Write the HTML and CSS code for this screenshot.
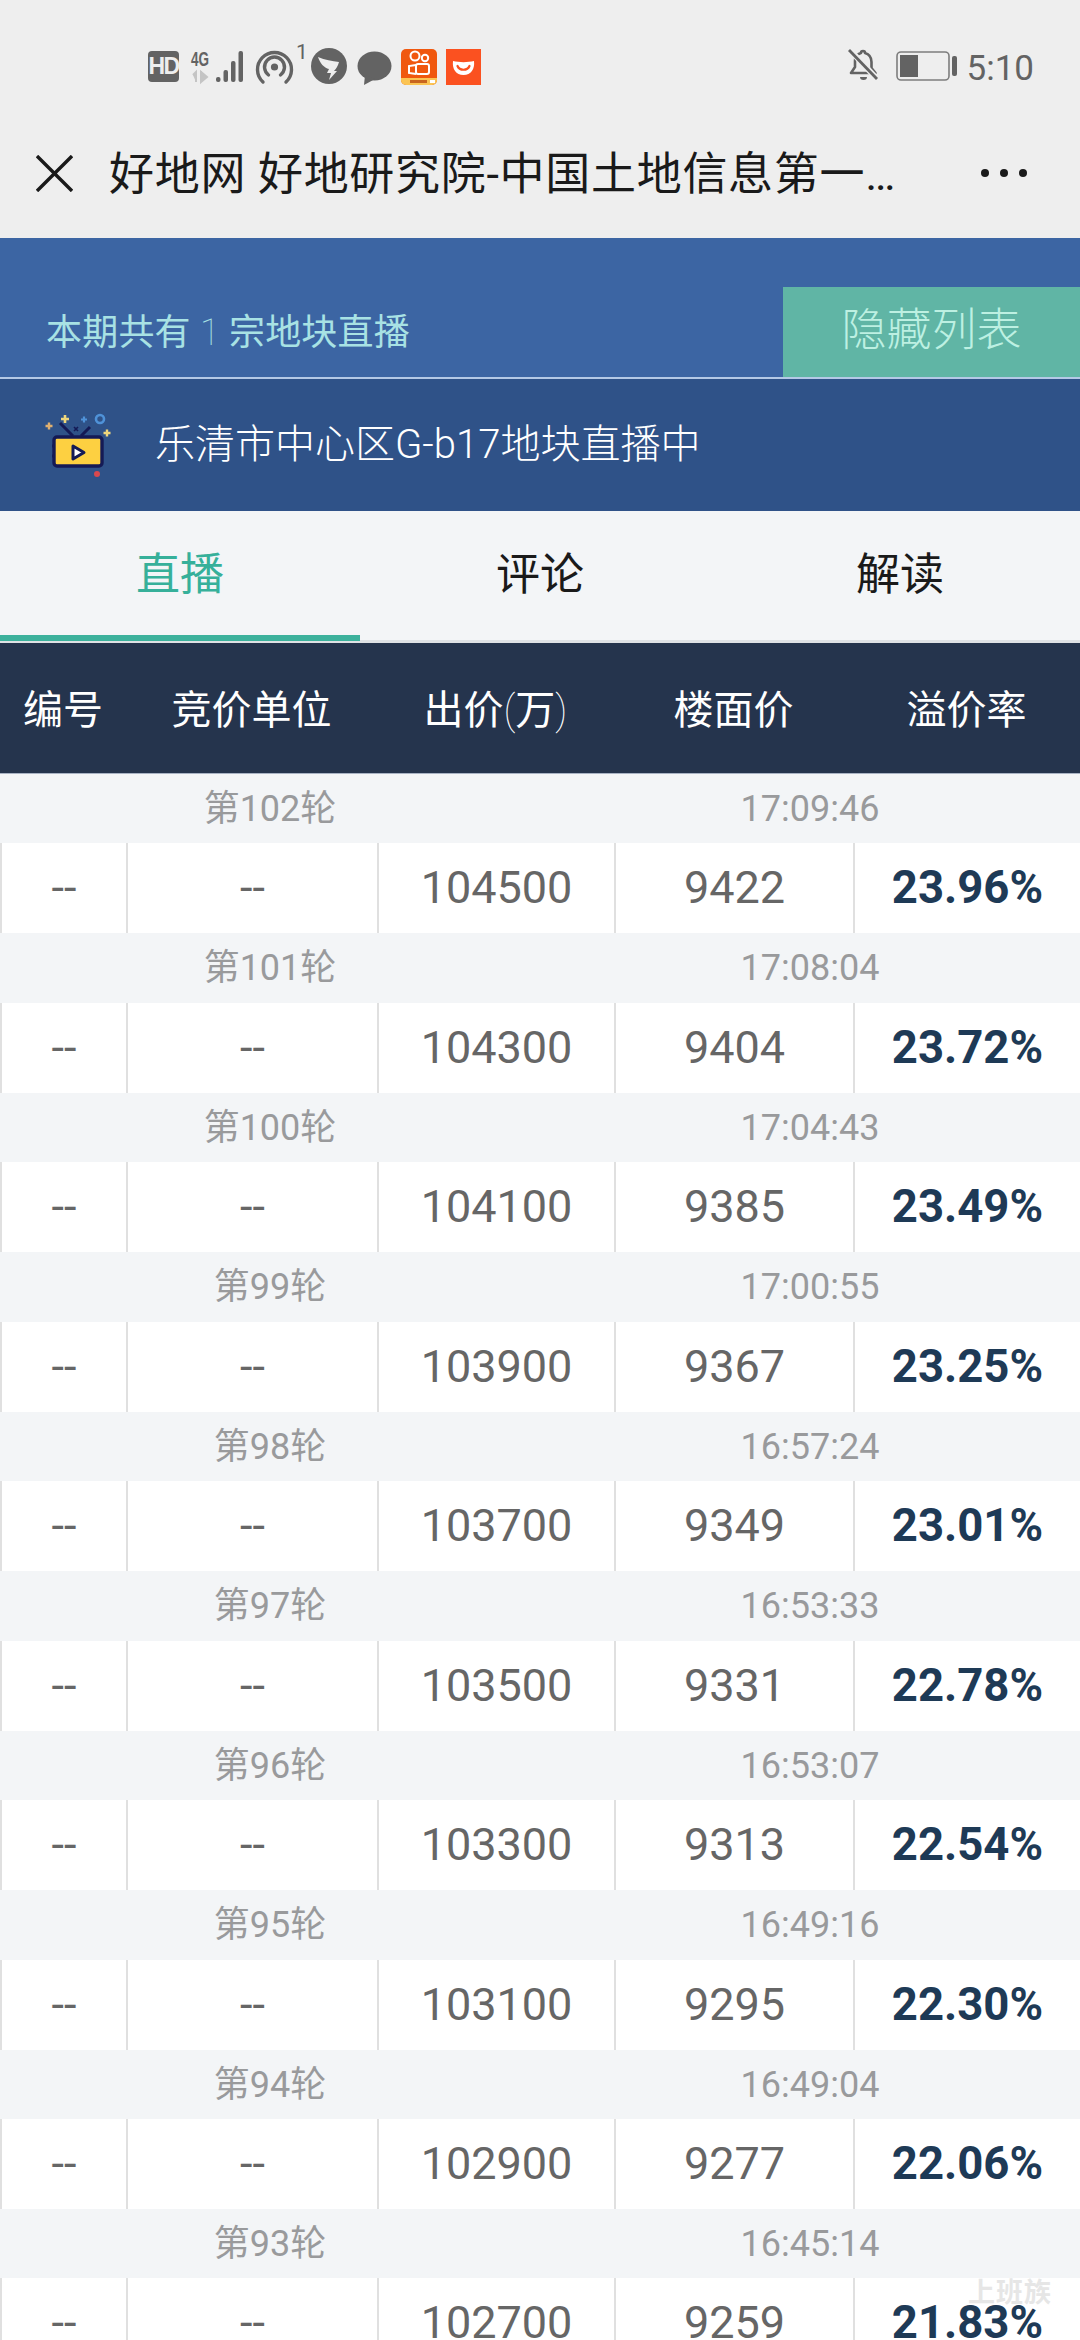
FILE: index.html
```html
<!DOCTYPE html>
<html lang="zh">
<head>
<meta charset="utf-8">
<title>好地网</title>
<link rel="stylesheet" href="styles.css">
</head>
<body>
<div class="page">
  <header class="chrome">
    <div class="status">
      <div class="status-left">
        <span class="hd">HD</span>
        <svg class="ic-signal" width="54" height="32" viewBox="0 0 54 32">
          <text x="0" y="15" class="net" textLength="18" lengthAdjust="spacingAndGlyphs">4G</text>
          <path d="M2 24l3-3v10M10 20v11M10 31l6-5-6-5z" fill="#c4c4c4" stroke="#c4c4c4" stroke-width="2"/>
          <rect x="25" y="26" width="4.500" height="5" rx="2" fill="#636363"/>
          <rect x="32.500" y="19" width="4.500" height="12" rx="2" fill="#636363"/>
          <rect x="40" y="10" width="4.500" height="21" rx="2" fill="#636363"/>
          <rect x="47.500" y="0" width="4.500" height="31" rx="2" fill="#636363"/>
        </svg>
        <svg class="ic-hot" width="47" height="42" viewBox="0 0 47 42">
          <path d="M7 38a17 17 0 1 1 23 0" fill="none" stroke="#636363" stroke-width="3.400" stroke-linecap="round" transform="translate(0 2)"/>
          <path d="M12.500 32a10 10 0 1 1 12 0" fill="none" stroke="#636363" stroke-width="3.400" stroke-linecap="round" transform="translate(0 1)"/>
          <circle cx="18.500" cy="25" r="3.600" fill="#636363"/>
          <text x="40" y="17" class="hot-n">1</text>
        </svg>
        <svg class="ic-ding" width="36" height="36" viewBox="0 0 36 36">
          <circle cx="18" cy="18" r="18" fill="#636363"/>
          <path d="M7 9c7 3 14 4 21 5-1 4-3 7-5 9h3l-8 9 2-7h-4l2-4c-5-1-9-6-11-12z" fill="#eeeeee"/>
        </svg>
        <svg class="ic-chat" width="35" height="35" viewBox="0 0 35 35">
          <ellipse cx="17.500" cy="15" rx="17" ry="14.500" fill="#636363"/>
          <path d="M8 24l-1 10 11-6z" fill="#636363"/>
        </svg>
        <svg class="ic-kuai" width="36" height="36" viewBox="0 0 36 36">
          <rect width="36" height="36" rx="5" fill="#f0580f"/>
          <path d="M0 29h36v2a5 5 0 0 1-5 5H5a5 5 0 0 1-5-5z" fill="#fbc453"/>
          <circle cx="14" cy="7" r="4.500" fill="none" stroke="#fff" stroke-width="2"/>
          <circle cx="24" cy="9" r="3.200" fill="none" stroke="#fff" stroke-width="2"/>
          <rect x="15" y="15" width="13" height="10" rx="2" fill="none" stroke="#fff" stroke-width="2"/>
          <path d="M15 16l-7 1v7l7 1" fill="none" stroke="#fff" stroke-width="2"/>
          <rect x="9" y="31" width="17" height="3" fill="#c8641e"/>
          <rect x="29" y="31" width="5" height="3" fill="#fff"/>
        </svg>
        <svg class="ic-red" width="35" height="36" viewBox="0 0 35 36">
          <rect width="35" height="36" fill="#fb5120"/>
          <path d="M7 12c6 1.500 15 1.500 21 0 1 8-3 14-10.500 14S6 20 7 12z" fill="#fff"/>
          <path d="M11.500 17c2 5 10 5 12 0" fill="none" stroke="#fb5120" stroke-width="2.200" stroke-linecap="round"/>
        </svg>
      </div>
      <div class="status-right">
        <svg width="31" height="34" viewBox="0 0 31 34">
          <path d="M15 3a2 2 0 0 1 2 2c5 1.500 6.500 5 6.500 9v6l4 5H3l4-6v-6c0-4 2-7 6-8a2 2 0 0 1 2-2z" fill="none" stroke="#636363" stroke-width="2.600" stroke-linejoin="round"/>
          <path d="M12 29a3.500 3 0 0 0 7 0z" fill="#636363"/>
          <path d="M2 2l27 29" stroke="#eeeeee" stroke-width="6"/>
          <path d="M1 2l28 29" stroke="#636363" stroke-width="2.800"/>
        </svg>
        <svg class="ic-batt" width="61" height="30" viewBox="0 0 61 30">
          <rect x="1" y="1" width="52" height="28" rx="4" fill="none" stroke="#7d7d7d" stroke-width="1.600"/>
          <rect x="4" y="4" width="18" height="22" fill="#636363"/>
          <rect x="56" y="5" width="5" height="20" rx="2" fill="#636363"/>
        </svg>
        <span class="clock">5:10</span>
      </div>
    </div>
    <nav class="navbar">
      <svg class="close" width="37" height="37" viewBox="0 0 37 37">
        <path d="M1 1l35 35M36 1L1 36" stroke="#1a1a1a" stroke-width="3.400" fill="none"/>
      </svg>
      <div class="title">好地网 好地研究院-中国土地信息第一品牌网站</div>
      <div class="more"><i></i><i></i><i></i></div>
    </nav>
  </header>

  <section class="banner">
    <div class="banner-top">
      <div class="count">本期共有 <span class="count-n">1</span> 宗地块直播</div>
      <div class="hide-btn">隐藏列表</div>
    </div>
    <div class="live">
      <svg class="tv" width="64" height="64" viewBox="0 0 64 64">
        <path d="M14 10l13 13M44 14l-9 9" stroke="#141a55" stroke-width="3" fill="none"/>
        <rect x="8" y="24" width="48" height="29" rx="3" fill="#fdd041" stroke="#141a55" stroke-width="3.400"/>
        <path d="M27 33l11 6.500-11 6.500z" fill="#fff" stroke="#141a55" stroke-width="3" stroke-linejoin="round"/>
        <path d="M6 33h3M6 43h3" stroke="#141a55" stroke-width="3"/>
        <path d="M28 14l4 4M32 14l-4 4" stroke="#141a55" stroke-width="1.600"/>
        <path d="M19 2v8M15 6h8" stroke="#efd77c" stroke-width="2.600"/>
        <path d="M38 3.500v6M35 6.500h6" stroke="#4f92d8" stroke-width="2.200"/>
        <circle cx="54" cy="6" r="4" fill="none" stroke="#4f92d8" stroke-width="2.600"/>
        <path d="M3 9.500v7M-.5 13h7" stroke="#e0b070" stroke-width="2.400"/>
        <path d="M61 16.500v7M57.500 20h7" stroke="#efd77c" stroke-width="2.400"/>
        <circle cx="51" cy="61" r="3" fill="#d9484e"/>
      </svg>
      <div class="live-name">乐清市中心区<span class="thin">G-b17</span>地块直播中</div>
    </div>
  </section>

  <div class="tabs">
    <div class="tab on">直播</div>
    <div class="tab">评论</div>
    <div class="tab">解读</div>
  </div>

  <div class="thead">
    <div>编号</div><div>竞价单位</div><div>出价<span class="paren">(</span>万<span class="paren">)</span></div><div>楼面价</div><div>溢价率</div>
  </div>

  <main class="list">
    <div class="round"><span>第102轮</span><span>17:09:46</span></div>
    <div class="row"><div>--</div><div>--</div><div>104500</div><div>9422</div><div class="rate">23.96%</div></div>
    <div class="round"><span>第101轮</span><span>17:08:04</span></div>
    <div class="row"><div>--</div><div>--</div><div>104300</div><div>9404</div><div class="rate">23.72%</div></div>
    <div class="round"><span>第100轮</span><span>17:04:43</span></div>
    <div class="row"><div>--</div><div>--</div><div>104100</div><div>9385</div><div class="rate">23.49%</div></div>
    <div class="round"><span>第99轮</span><span>17:00:55</span></div>
    <div class="row"><div>--</div><div>--</div><div>103900</div><div>9367</div><div class="rate">23.25%</div></div>
    <div class="round"><span>第98轮</span><span>16:57:24</span></div>
    <div class="row"><div>--</div><div>--</div><div>103700</div><div>9349</div><div class="rate">23.01%</div></div>
    <div class="round"><span>第97轮</span><span>16:53:33</span></div>
    <div class="row"><div>--</div><div>--</div><div>103500</div><div>9331</div><div class="rate">22.78%</div></div>
    <div class="round"><span>第96轮</span><span>16:53:07</span></div>
    <div class="row"><div>--</div><div>--</div><div>103300</div><div>9313</div><div class="rate">22.54%</div></div>
    <div class="round"><span>第95轮</span><span>16:49:16</span></div>
    <div class="row"><div>--</div><div>--</div><div>103100</div><div>9295</div><div class="rate">22.30%</div></div>
    <div class="round"><span>第94轮</span><span>16:49:04</span></div>
    <div class="row"><div>--</div><div>--</div><div>102900</div><div>9277</div><div class="rate">22.06%</div></div>
    <div class="round"><span>第93轮</span><span>16:45:14</span></div>
    <div class="row"><div>--</div><div>--</div><div>102700</div><div>9259</div><div class="rate">21.83%</div></div>
  </main>
  <div class="mark">上班族</div>
</div>
</body>
</html>
```
FILE: styles.css
```css
* { box-sizing: border-box; }
html, body { margin: 0; padding: 0; }
body {
  width: 1080px;
  height: 2340px;
  overflow: hidden;
  background: #f3f5f7;
  font-family: Roboto, "Noto Sans CJK SC", sans-serif;
}
.page { position: relative; width: 1080px; height: 2340px; overflow: hidden; }

/* chrome */
.chrome { height: 238px; background: #eeeeee; }
.status {
  height: 108px;
  padding: 42px 46px 0 148px;
  display: flex;
  justify-content: space-between;
  align-items: flex-start;
}
.status svg { overflow: visible; }
.status-left { display: flex; align-items: flex-start; }
.status-right { display: flex; align-items: flex-start; padding-top: 6px; }
.hd {
  width: 31px; height: 31px; margin-top: 9px;
  background: #636363; color: #eee; border-radius: 4px;
  font: 700 23px/31px "Liberation Sans", sans-serif;
  text-align: center; letter-spacing: -1.5px;
}
.ic-signal { margin: 9px 0 0 12px; }
.net { font: 700 20px "Liberation Sans", sans-serif; fill: #636363; }
.ic-hot { margin: 0 0 0 11px; }
.hot-n { font: 400 21px Roboto, sans-serif; fill: #636363; }
.ic-ding { margin: 6px 0 0 8px; }
.ic-chat { margin: 9px 0 0 10px; }
.ic-kuai { margin: 7px 0 0 9px; }
.ic-red { margin: 7px 0 0 9px; }
.ic-batt { margin: 3px 0 0 17px; }
.clock { margin-left: 10px; font-size: 35px; line-height: 42px; color: #636363; }

.navbar {
  height: 130px;
  padding: 0 36px;
  display: flex;
  align-items: center;
}
.close { flex: none; }
.title {
  margin: 4px 0 0 36px;
  width: 791px;
  font-size: 45px;
  letter-spacing: 0.7px;
  line-height: 60px;
  color: #1a1a1a;
  white-space: nowrap;
  overflow: hidden;
  text-overflow: ellipsis;
}
.more { margin-left: 81px; display: flex; gap: 11px; }
.more i { width: 8px; height: 8px; border-radius: 50%; background: #1a1a1a; }

/* banner */
.banner-top {
  height: 141px;
  background: #3c65a3;
  border-bottom: 2px solid #b4c9e6;
  display: flex;
  justify-content: space-between;
  align-items: flex-end;
}
.count {
  padding: 0 0 22px 46px;
  font-size: 36px;
  letter-spacing: 0.2px;
  line-height: 44px;
  color: #a8e2e4;
}
.count-n { font-weight: 100; }
.hide-btn {
  width: 297px;
  height: 90px;
  background: #60b5a5;
  color: #bdf0e2;
  font-size: 45px;
  font-weight: 300;
  line-height: 88px;
  text-align: center;
}
.live {
  height: 132px;
  background: #2f5288;
  padding-left: 46px;
  display: flex;
  align-items: center;
}
.tv { flex: none; overflow: visible; }
.live-name { margin-left: 45px; font-size: 40px; font-weight: 300; color: #fff; line-height: 50px; }

/* tabs */
.tabs {
  height: 132px;
  background: #f3f5f7;
  border-bottom: 3px solid #dfe2e5;
  display: grid;
  grid-template-columns: 360px 360px 360px;
}
.tab {
  height: 130px;
  font-size: 44px;
  line-height: 128px;
  text-align: center;
  color: #1a1a1a;
}
.tab.on { color: #36b09a; border-bottom: 6px solid #3cb19c; }

/* table */
.thead, .row { display: grid; grid-template-columns: 126px 251px 237px 239px 227px; }
.thead {
  height: 131px;
  background: #25344d;
  border-bottom: 1px solid #a9b3c4;
  color: #fff;
  font-size: 40px;
  line-height: 136px;
  text-align: center;
}
.paren { font-weight: 100; }
.round {
  height: 69.44px;
  display: grid;
  grid-template-columns: 540px 540px;
  font-size: 36px;
  line-height: 70px;
  color: #999a9c;
  text-align: center;
}
.row {
  height: 90px;
  background: #fff;
  font-size: 45px;
  line-height: 89px;
  text-align: center;
  color: #666666;
}
.row > div { border-left: 2px solid #e0e0e0; }
.rate { font-size: 45.5px; font-weight: 700; color: #1e3a56; }

.mark {
  position: absolute;
  left: 968px; top: 2276px;
  font-size: 27px;
  font-weight: 700;
  line-height: 34px;
  letter-spacing: 1px;
  color: #e6e6e6;
}
```
